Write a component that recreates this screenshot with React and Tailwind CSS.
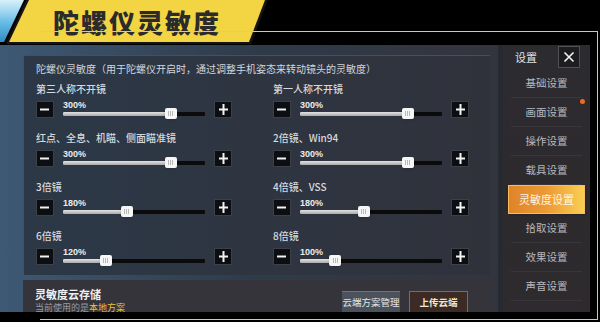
import React from 'react';

const FONT = { fontFamily: '"Noto Sans CJK SC", "Noto Sans", sans-serif' };

// 陀螺仪灵敏度的各项数值（pos 为滑块位置百分比）
const ROWS = [
  [
    { label: '第三人称不开镜', value: '300%', pos: 76 },
    { label: '第一人称不开镜', value: '300%', pos: 76 },
  ],
  [
    { label: '红点、全息、机瞄、侧面瞄准镜', value: '300%', pos: 76 },
    { label: '2倍镜、Win94', value: '300%', pos: 76 },
  ],
  [
    { label: '3倍镜', value: '180%', pos: 45 },
    { label: '4倍镜、VSS', value: '180%', pos: 45 },
  ],
  [
    { label: '6倍镜', value: '120%', pos: 30 },
    { label: '8倍镜', value: '100%', pos: 25 },
  ],
];

const MENU = ['基础设置', '画面设置', '操作设置', '载具设置', '灵敏度设置', '拾取设置', '效果设置', '声音设置'];

function StepButton({ plus }) {
  return (
    <div className="w-[18px] h-[17px] bg-[#0c0e11] border border-[#3b4049] flex items-center justify-center">
      <svg width="11" height="11" viewBox="0 0 11 11">
        <rect x="1" y="4.5" width="9" height="2" fill="#f2f2f2" />
        {plus && <rect x="4.5" y="0" width="2" height="11" fill="#f2f2f2" />}
      </svg>
    </div>
  );
}

function Slider({ item }) {
  return (
    <div className="w-[143px] h-[17px] flex flex-col">
      <div className="h-[9px] text-[9px] leading-[9px] font-bold text-[#ececec]" style={{ fontFamily: '"Liberation Sans", Arial, sans-serif' }}>
        {item.value}
      </div>
      <div className="relative h-[8px] flex items-center">
        <div className="w-full h-[4px] bg-[#0b0b0c] rounded-[1px] overflow-hidden">
          <div className="h-full bg-gradient-to-b from-[#e4e4e4] to-[#a9a9a9]" style={{ width: `${item.pos}%` }} />
        </div>
        <div
          className="absolute top-[-2px] w-[12px] h-[11px] -ml-[6px] bg-[#f6f6f6] rounded-[2px] flex items-center justify-center gap-[1px] shadow"
          style={{ left: `${item.pos}%` }}
        >
          <span className="w-[1px] h-[5px] bg-[#b8b8b8]" />
          <span className="w-[1px] h-[5px] bg-[#b8b8b8]" />
          <span className="w-[1px] h-[5px] bg-[#b8b8b8]" />
        </div>
      </div>
    </div>
  );
}

function SensItem({ item }) {
  return (
    <div className="w-[196px] flex flex-col gap-[5px]">
      <div className="h-[14px] text-[10px] leading-[14px] font-medium text-[#d6d9de] whitespace-nowrap">{item.label}</div>
      <div className="flex items-center gap-[9px]">
        <StepButton />
        <Slider item={item} />
        <StepButton plus />
      </div>
    </div>
  );
}

export default function App() {
  return (
    <div className="relative w-[600px] h-[322px] bg-black overflow-hidden flex flex-col" style={FONT}>
      {/* 顶部标题栏 */}
      <div className="relative h-[45px] shrink-0 bg-black">
        <div className="absolute left-0 top-0 w-[26px] h-[42px] bg-gradient-to-b from-[#d7f0fb] via-[#6cc0e6] to-[#2f8cc4] [clip-path:polygon(0_0,24px_0,4px_42px,0_42px)]" />
        <div className="absolute left-0 top-0 w-[272px] h-[44px] bg-[#141414] [clip-path:polygon(26px_0,268px_0,251px_44px,6px_44px)]" />
        <div className="absolute left-0 top-0 w-[272px] h-[43px] bg-[#f3d443] [clip-path:polygon(29px_0,265px_0,249px_42px,9px_42px)] flex items-center pl-[53px]">
          <span className="text-[26px] leading-none font-black tracking-[2px] text-[#2b2b2b]">陀螺仪灵敏度</span>
        </div>
      </div>

      {/* 主体 */}
      <div className="flex h-[267px] shrink-0">
        <div className="w-[498px] bg-gradient-to-r from-[#3e5975] via-[#2f3b4a] to-[#33343d] pl-[23px] pr-[8px] pt-[10px] flex flex-col gap-[5px]">
          <div className="h-[220px] bg-gradient-to-r from-[#2c3847] to-[#30323b] border-t border-l border-[#46505d] px-[12px] pt-[6px] flex flex-col gap-[6px]">
            <div className="h-[14px] text-[10px] leading-[14px] text-[#d3d6db] whitespace-nowrap">
              陀螺仪灵敏度（用于陀螺仪开启时，通过调整手机姿态来转动镜头的灵敏度）
            </div>
            <div className="flex flex-col gap-[13px]">
              {ROWS.map((row, i) => (
                <div key={i} className="flex gap-[41px]">
                  {row.map((item) => (
                    <SensItem key={item.label} item={item} />
                  ))}
                </div>
              ))}
            </div>
          </div>

          {/* 云存储 */}
          <div className="flex-1 bg-[#35343b] px-[12px] pt-[7px] flex justify-between overflow-hidden">
            <div className="flex flex-col gap-[1px]">
              <div className="h-[14px] text-[11px] leading-[14px] font-bold text-[#f0f0f0]">灵敏度云存储</div>
              <div className="h-[12px] text-[9px] leading-[12px] text-[#9a9aa0] whitespace-nowrap">
                当前使用的是<span className="text-[#e8c531]">本地方案</span>
              </div>
            </div>
            <div className="flex gap-[9px] pt-[4px] pr-[10px]">
              <div className="w-[58px] h-[21px] bg-[#4b525c] border-t border-[#6a727c] flex items-center justify-center text-[9.5px] text-[#e6e6e6]">
                云端方案管理
              </div>
              <div className="w-[59px] h-[22px] bg-[#3b2b24] border border-[#8a6a44] flex items-center justify-center text-[9.5px] font-bold text-[#f0e6d8]">
                上传云端
              </div>
            </div>
          </div>
        </div>

        {/* 右侧菜单 */}
        <div className="w-[5px] bg-[#262a31]" />
        <div className="w-[87px] bg-gradient-to-b from-[#2c2b2f] to-[#2e2a2e] flex flex-col">
          <div className="h-[24px] flex items-start justify-between pl-[12px] pr-[10px] pt-[1px]">
            <span className="text-[11px] leading-[22px] text-[#e2e2e2]">设置</span>
            <div className="w-[22px] h-[22px] bg-[#1d1d20] border border-[#505056] flex items-center justify-center">
              <svg width="12" height="12" viewBox="0 0 12 12">
                <path d="M1.5 1.5 L10.5 10.5 M10.5 1.5 L1.5 10.5" stroke="#f4f4f4" strokeWidth="1.6" />
              </svg>
            </div>
          </div>
          <div className="flex flex-col px-[5px]">
            {MENU.map((name, i) =>
              i === 4 ? (
                <div
                  key={name}
                  className="h-[29px] bg-gradient-to-r from-[#df8528] via-[#ec9a34] to-[#f8cf52] border border-[#f6be5c] flex items-center justify-center text-[11px] text-[#fff6e6] shadow"
                >
                  {name}
                </div>
              ) : (
                <div
                  key={name}
                  className="relative h-[29px] border-b border-[#38363b] mx-[3px] flex items-center justify-center text-[10.5px] text-[#b9b8be]"
                >
                  {name}
                  {i === 1 && <span className="absolute right-[-3px] top-[1px] w-[5px] h-[5px] rounded-full bg-[#f06a1c]" />}
                </div>
              )
            )}
          </div>
        </div>
        <div className="flex-1 bg-black" />
      </div>

      <div className="flex-1 bg-black" />

      {/* 外框黄线 */}
      <div className="pointer-events-none absolute left-[40px] right-[2px] top-[31px] bottom-[2px] border-t border-r border-b border-[#e2cf5c]" />
    </div>
  );
}
